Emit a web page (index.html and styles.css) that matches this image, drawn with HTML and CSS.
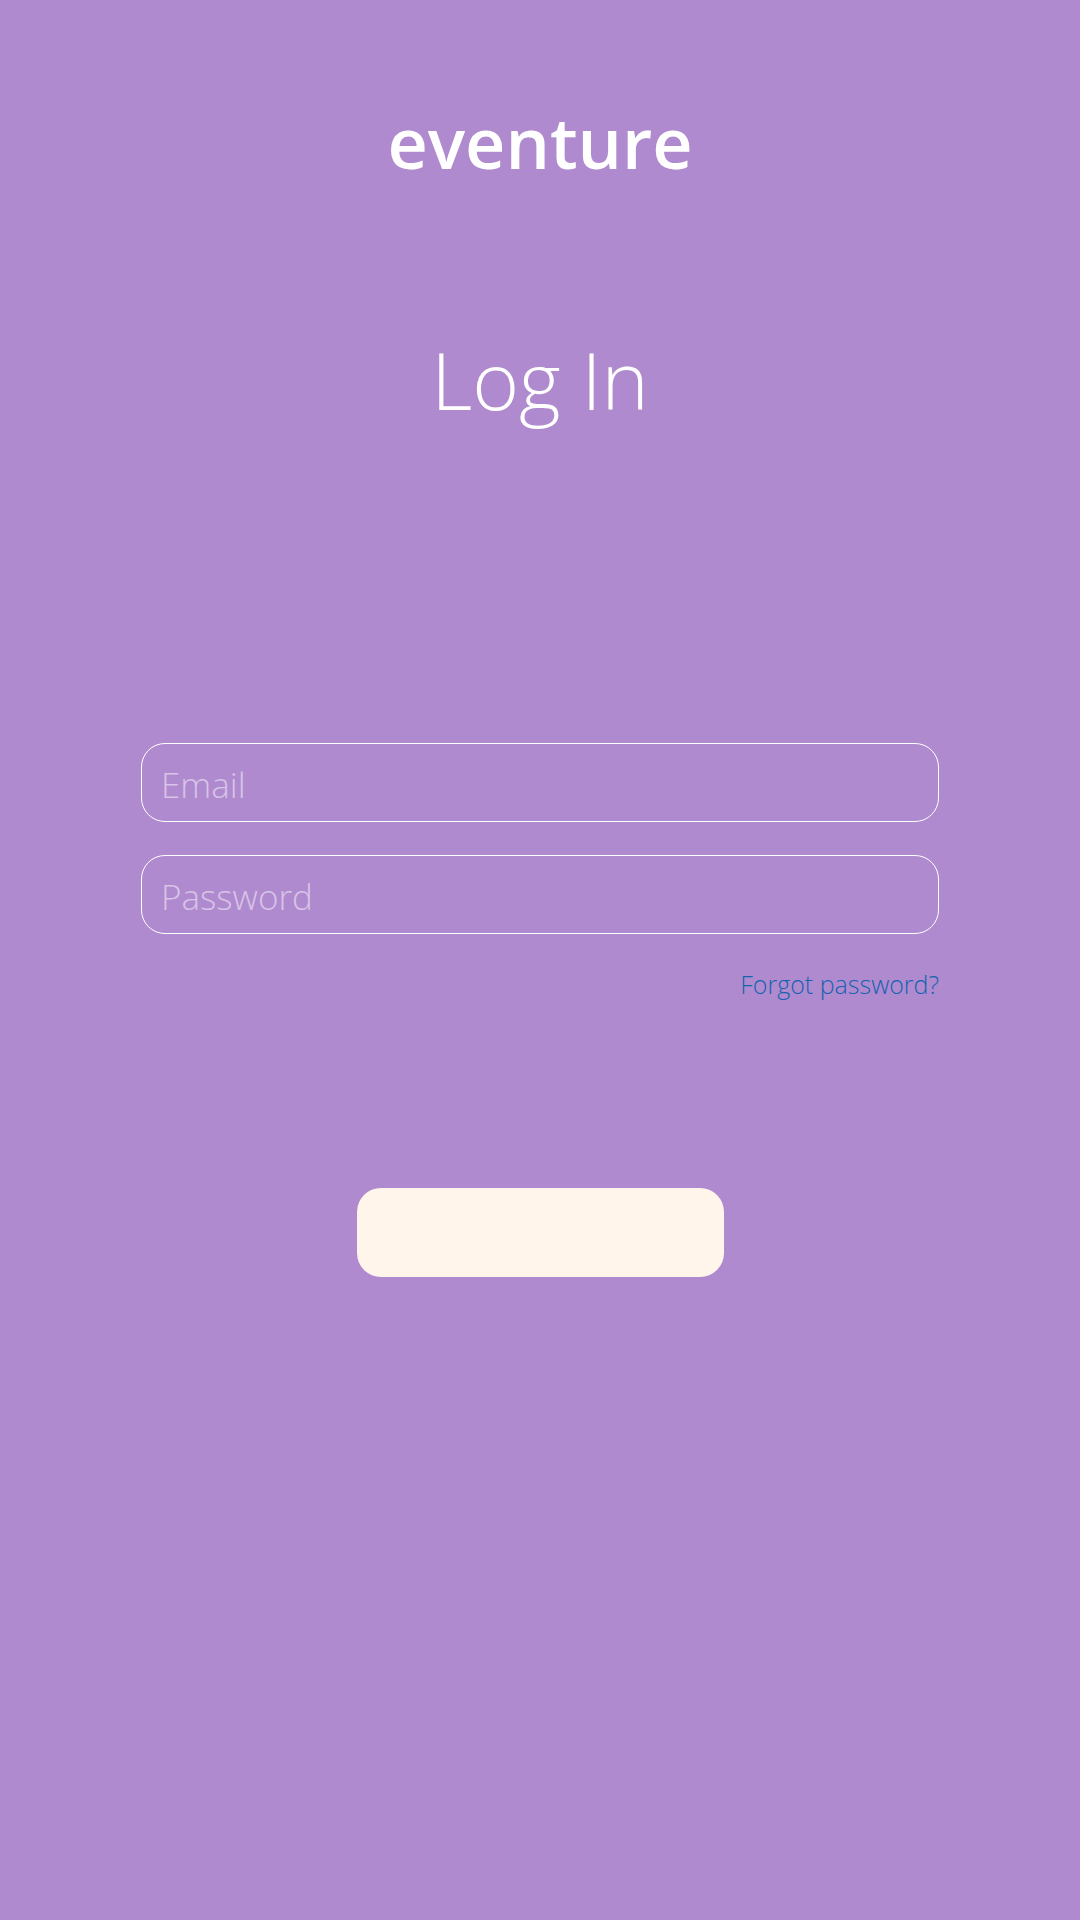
FILE: index.html
```html
<!DOCTYPE html>
<html lang="en">
<head>
<meta charset="utf-8">
<title>eventure - Log In</title>
<link rel="stylesheet" href="styles.css">
</head>
<body>
<main class="page">
  <h1 class="brand">eventure</h1>
  <h2 class="title">Log In</h2>
  <form class="form">
    <input class="field" type="email" placeholder="Email">
    <input class="field" type="password" placeholder="Password">
    <a class="forgot" href="#">Forgot password?</a>
    <button class="submit" type="button"></button>
  </form>
</main>
</body>
</html>
```
FILE: styles.css
```css
html, body {
  margin: 0;
  padding: 0;
}
body {
  background: #b08acf;
  font-family: "Open Sans", "Noto Sans", sans-serif;
  width: 1080px;
  height: 1920px;
  overflow: hidden;
}
.page {
  display: flex;
  flex-direction: column;
  align-items: center;
  padding-top: 94px;
}
.brand {
  margin: 0;
  font-size: 70px;
  font-weight: 600;
  color: #ffffff;
  line-height: normal;
  letter-spacing: 0;
}
.title {
  margin: 134px 0 0;
  font-size: 80px;
  font-weight: 300;
  color: #ffffff;
  line-height: normal;
}
.form {
  margin-top: 310px;
  width: 798px;
  display: flex;
  flex-direction: column;
}
.field {
  box-sizing: border-box;
  width: 100%;
  height: 79px;
  margin: 0 0 33px;
  padding: 3px 19px 0;
  border: 1.5px solid #ffffff;
  border-radius: 24px;
  background: transparent;
  font-family: "Open Sans", "Noto Sans", sans-serif;
  font-size: 35px;
  font-weight: 300;
  color: #ffffff;
  outline: none;
}
.field::placeholder {
  color: rgba(255, 255, 255, 0.5);
}
.forgot {
  align-self: flex-end;
  margin-top: 0;
  font-size: 25px;
  font-weight: 300;
  color: #1763b0;
  text-decoration: none;
  line-height: normal;
}
.submit {
  align-self: center;
  margin-top: 187px;
  width: 367px;
  height: 89px;
  border: none;
  border-radius: 24px;
  background: #fff5eb;
  padding: 0;
}
```
